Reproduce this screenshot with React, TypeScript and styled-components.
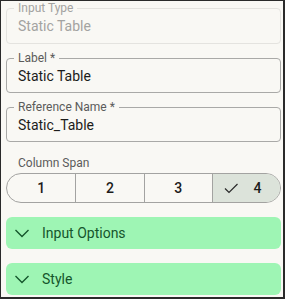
import React from "react";
import styled, { createGlobalStyle } from "styled-components";

const Global = createGlobalStyle`
  html, body { margin: 0; padding: 0; background: #f9f8f4; }
  body { font-family: Roboto, "Noto Sans", Arial, sans-serif; }
  * { box-sizing: border-box; }
`;

const Frame = styled.div`
  width: 285px;
  height: 299px;
  background: #f9f8f4;
  border-style: solid;
  border-color: #2a2a2a;
  border-width: 1px 2px 2px 1px;
  padding: 7px 2px 0 5px;
  display: flex;
  flex-direction: column;
  overflow: hidden;
`;

const Field = styled.div<{ $disabled?: boolean; $mt: number; $h: number }>`
  position: relative;
  margin-top: ${(p) => p.$mt}px;
  height: ${(p) => p.$h}px;
  border: 1px solid ${(p) => (p.$disabled ? "#e4e3df" : "#a9a9a7")};
  border-radius: 4px;
  display: flex;
  align-items: center;
  padding-left: 11px;
`;

const FieldLabel = styled.span<{ $disabled?: boolean }>`
  position: absolute;
  left: 7px;
  top: -9px;
  padding: 0 4px;
  background: #f9f8f4;
  font-size: 12px;
  line-height: 16px;
  color: ${(p) => (p.$disabled ? "#a3a3a1" : "#5b5b5a")};
`;

const FieldValue = styled.span<{ $disabled?: boolean }>`
  font-size: 14px;
  line-height: 20px;
  color: ${(p) => (p.$disabled ? "#a3a3a1" : "#1c1c1b")};
`;

const GroupLabel = styled.div`
  margin-top: 13px;
  padding-left: 12px;
  font-size: 12px;
  line-height: 16px;
  color: #5b5b5a;
`;

const Segmented = styled.div`
  margin-top: 2px;
  height: 30px;
  display: grid;
  grid-template-columns: repeat(4, 1fr);
  border: 1px solid #a3a3a1;
  border-radius: 15px;
  overflow: hidden;
`;

const Segment = styled.div<{ $selected?: boolean }>`
  display: flex;
  align-items: center;
  justify-content: center;
  gap: 14px;
  padding-right: ${(p) => (p.$selected ? "8px" : "0")};
  font-size: 14px;
  font-weight: 500;
  color: #1c1c1b;
  background: ${(p) => (p.$selected ? "#dce3da" : "transparent")};
  & + & { border-left: 1px solid #a3a3a1; }
`;

const Accordion = styled.div`
  margin-top: 14px;
  height: 32px;
  background: #9ef5b4;
  border-radius: 6px;
  display: flex;
  align-items: center;
  padding-left: 8px;
  gap: 12px;
  color: #15562c;
  font-size: 14px;
`;

const Check = () => (
  <svg width="16" height="12" viewBox="0 0 16 12" fill="none">
    <path d="M2 6.5 L6 10.5 L14.5 2" stroke="#2a2a2a" strokeWidth="1.2" />
  </svg>
);

const Chevron = () => (
  <svg width="16" height="10" viewBox="0 0 16 10" fill="none">
    <path d="M1.5 2 L8 8.5 L14.5 2" stroke="#15562c" strokeWidth="1.4" />
  </svg>
);

export default function App() {
  return (
    <>
      <Global />
      <Frame>
        <Field $disabled $mt={0} $h={36}>
          <FieldLabel $disabled>Input Type</FieldLabel>
          <FieldValue $disabled>Static Table</FieldValue>
        </Field>
        <Field $mt={14} $h={35}>
          <FieldLabel>Label *</FieldLabel>
          <FieldValue>Static Table</FieldValue>
        </Field>
        <Field $mt={14} $h={35}>
          <FieldLabel>Reference Name *</FieldLabel>
          <FieldValue>Static_Table</FieldValue>
        </Field>
        <GroupLabel>Column Span</GroupLabel>
        <Segmented>
          <Segment>1</Segment>
          <Segment>2</Segment>
          <Segment>3</Segment>
          <Segment $selected>
            <Check />
            4
          </Segment>
        </Segmented>
        <Accordion>
          <Chevron />
          Input Options
        </Accordion>
        <Accordion>
          <Chevron />
          Style
        </Accordion>
      </Frame>
    </>
  );
}
